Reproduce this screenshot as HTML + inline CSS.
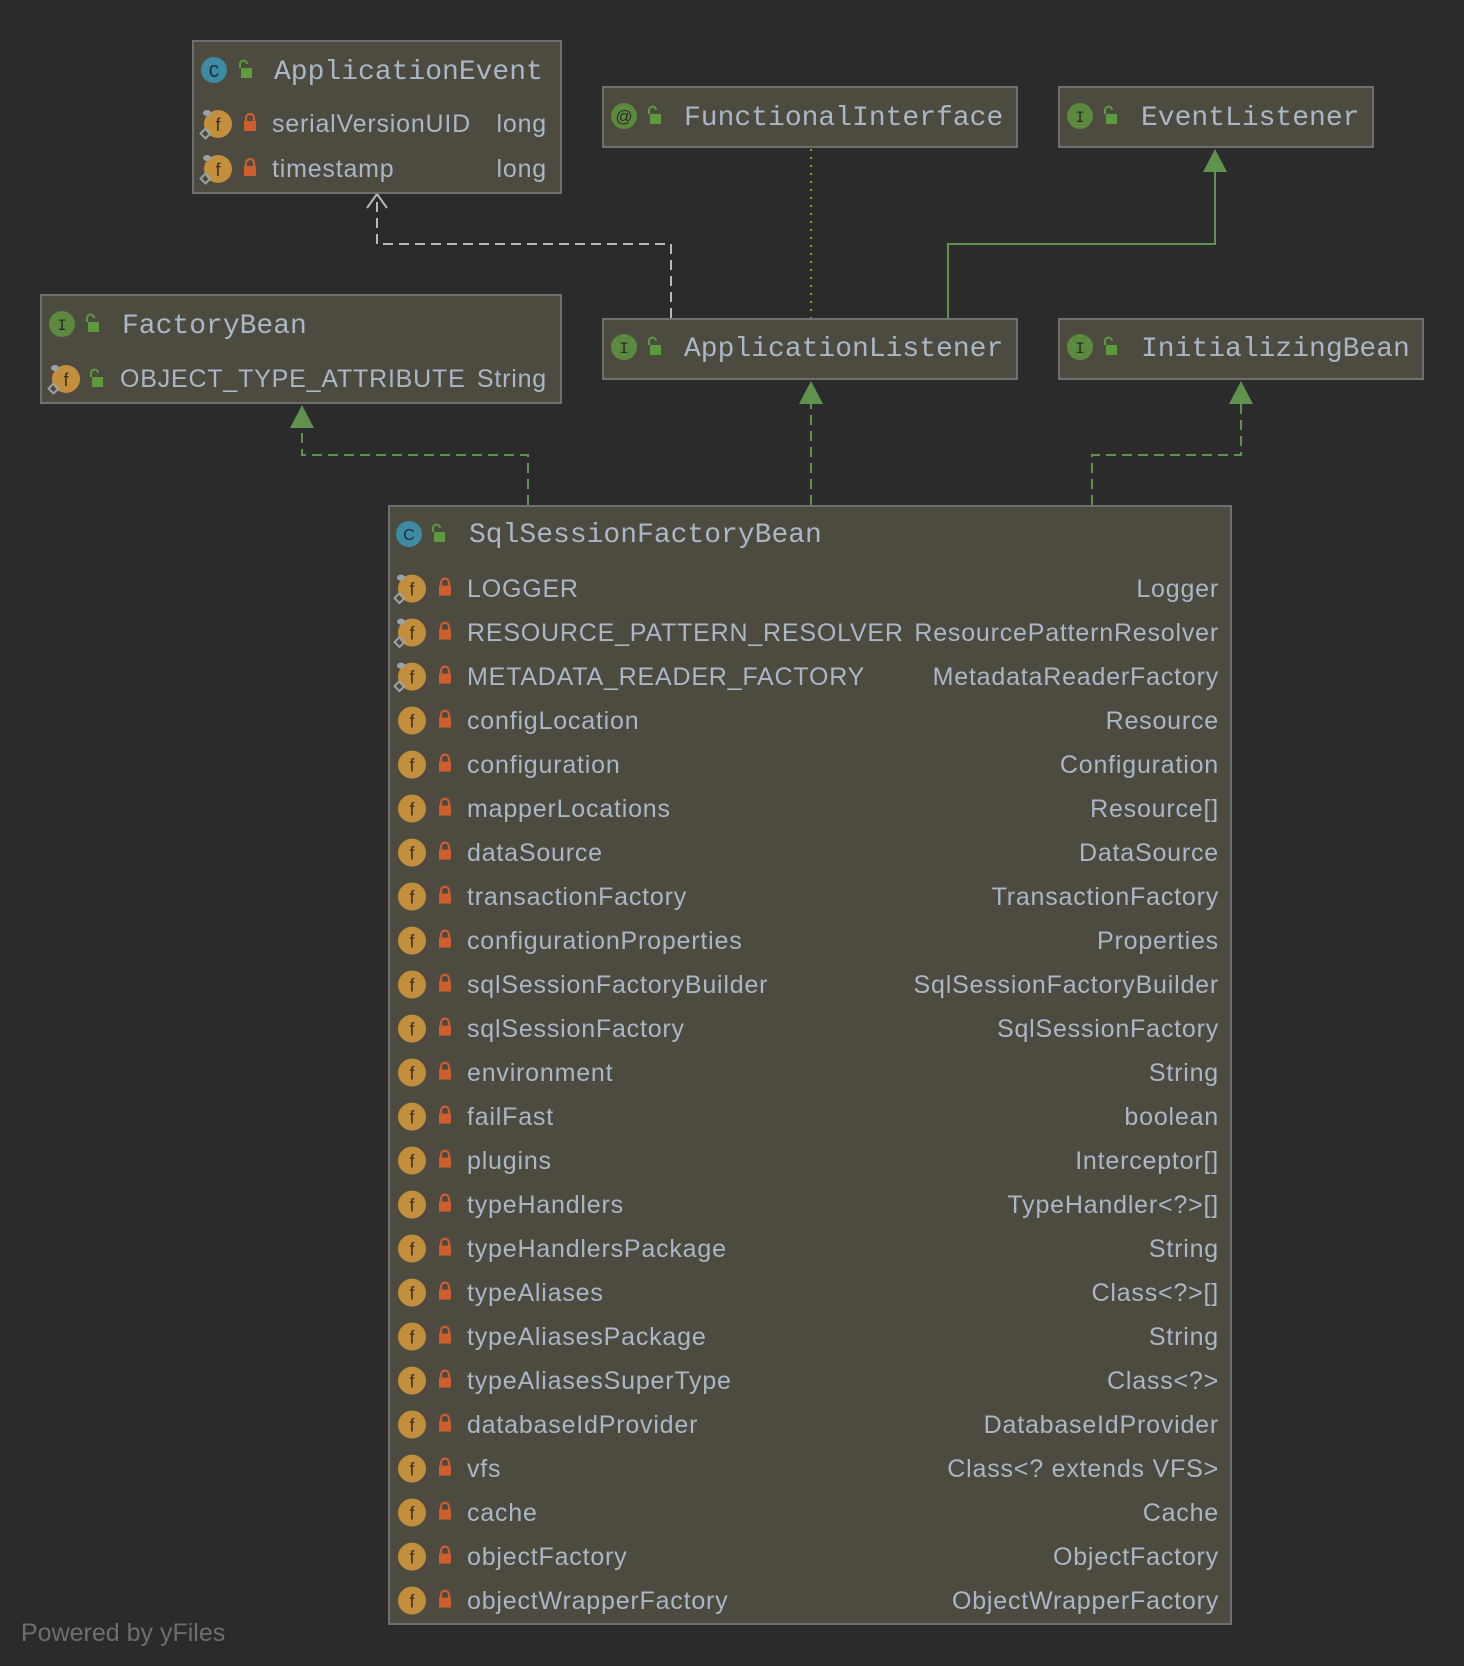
<!DOCTYPE html>
<html><head><meta charset="utf-8"><style>
html,body{margin:0;padding:0;background:#2b2b2b;}
body{width:1464px;height:1666px;position:relative;overflow:hidden;font-family:"Liberation Sans",sans-serif;color:#a9b7c6;}
.box{position:absolute;background:#4d4a40;border:2px solid #6f6f6f;box-sizing:border-box;}
.t{position:absolute;white-space:nowrap;line-height:30px;height:30px;}
.mono{font-family:"Liberation Mono",monospace;font-size:28px;margin-top:3px;}
.s{font-size:25px;letter-spacing:0.8px;}
.r{text-align:right;}
svg{position:absolute;left:0;top:0;}
</style></head><body>
<svg width="1464" height="1666" viewBox="0 0 1464 1666">
<defs>
<g id="f"><circle r="14" fill="#c38f3d"/><text x="0" y="7" font-family="Liberation Sans" font-size="18" fill="#3a3020" text-anchor="middle">f</text></g>
<g id="fs"><circle r="14" fill="#c38f3d"/><text x="0" y="7" font-family="Liberation Sans" font-size="18" fill="#3a3020" text-anchor="middle">f</text><ellipse cx="-11" cy="-11" rx="4" ry="3" fill="#9aa3ab"/><rect x="-16" y="6" width="7" height="7" fill="none" stroke="#9aa3ab" stroke-width="2" transform="rotate(45 -12.5 9.5)"/></g>
<g id="lk"><rect x="-6" y="-3" width="12" height="10" fill="#cc5f2d"/><path d="M-4,-3 v-3 a4,4 0 0 1 8,0 v3" fill="none" stroke="#cc5f2d" stroke-width="2.2"/></g>
<g id="ol"><rect x="-4" y="-2" width="11" height="10" fill="#5c9a3d"/><path d="M-5,-2 v-4 a3.5,3.5 0 0 1 7,0" fill="none" stroke="#5c9a3d" stroke-width="2"/></g>
<g id="I"><circle r="13" fill="#5b8a3e"/><text x="0" y="6" font-family="Liberation Mono" font-size="16" fill="#2b2b2b" text-anchor="middle">I</text></g>
</defs>
<path d="M671,318 V244 H377 V196" fill="none" stroke="#b8b8b8" stroke-width="2" stroke-dasharray="10,6"/>
<path d="M367,208 L377,194 L387,208" fill="none" stroke="#b8b8b8" stroke-width="2"/>
<path d="M811,149 V318" fill="none" stroke="#9a9a20" stroke-width="2" stroke-dasharray="2,6"/>
<path d="M948,318 V244 H1215 V170" fill="none" stroke="#5f924e" stroke-width="2"/>
<path d="M1203,172 L1215,149 L1227,172 Z" fill="#5f924e"/>
<path d="M528,505 V455 H302 V425" fill="none" stroke="#5f924e" stroke-width="2" stroke-dasharray="10,6"/>
<path d="M290,428 L302,405 L314,428 Z" fill="#5f924e"/>
<path d="M811,505 V402" fill="none" stroke="#5f924e" stroke-width="2" stroke-dasharray="10,6"/>
<path d="M799,404 L811,381 L823,404 Z" fill="#5f924e"/>
<path d="M1092,505 V455 H1241 V402" fill="none" stroke="#5f924e" stroke-width="2" stroke-dasharray="10,6"/>
<path d="M1229,404 L1241,381 L1253,404 Z" fill="#5f924e"/>
</svg>

<div class="box" style="left:192px;top:40px;width:370px;height:154px"></div>
<div class="box" style="left:602px;top:86px;width:416px;height:62px"></div>
<div class="box" style="left:1058px;top:86px;width:316px;height:62px"></div>
<div class="box" style="left:40px;top:294px;width:522px;height:110px"></div>
<div class="box" style="left:602px;top:318px;width:416px;height:62px"></div>
<div class="box" style="left:1058px;top:318px;width:366px;height:62px"></div>
<div class="box" style="left:388px;top:505px;width:844px;height:1120px"></div>

<svg width="1464" height="1666" viewBox="0 0 1464 1666">
<circle cx="214" cy="70" r="13" fill="#3d8ba3"/><text x="214" y="77" font-family="Liberation Mono" font-size="18" fill="#1f2a30" text-anchor="middle">C</text>
<use href="#ol" x="245" y="70"/>
<use href="#fs" x="218" y="124"/><use href="#lk" x="250" y="124"/>
<use href="#fs" x="218" y="169"/><use href="#lk" x="250" y="169"/>
<circle cx="624" cy="116" r="13" fill="#5b8a3e"/><text x="624" y="122" font-family="Liberation Sans" font-size="17" fill="#2b2b2b" text-anchor="middle">@</text>
<use href="#ol" x="654" y="116"/>
<use href="#I" x="1080" y="116"/><use href="#ol" x="1110" y="116"/>
<use href="#I" x="62" y="324"/><use href="#ol" x="92" y="324"/>
<use href="#fs" x="66" y="379"/><use href="#ol" x="96" y="379"/>
<use href="#I" x="624" y="347"/><use href="#ol" x="654" y="347"/>
<use href="#I" x="1080" y="347"/><use href="#ol" x="1110" y="347"/>
<circle cx="409" cy="534" r="13" fill="#3d8ba3"/><text x="409" y="540" font-family="Liberation Sans" font-size="16" fill="#1f2a30" text-anchor="middle">C</text>
<use href="#ol" x="438" y="534"/>
<use href="#fs" x="412" y="588.6"/><use href="#lk" x="445" y="588.6"/>
<use href="#fs" x="412" y="632.6"/><use href="#lk" x="445" y="632.6"/>
<use href="#fs" x="412" y="676.6"/><use href="#lk" x="445" y="676.6"/>
<g>
<use href="#f" x="412" y="720.6"/><use href="#lk" x="445" y="720.6"/>
<use href="#f" x="412" y="764.6"/><use href="#lk" x="445" y="764.6"/>
<use href="#f" x="412" y="808.6"/><use href="#lk" x="445" y="808.6"/>
<use href="#f" x="412" y="852.6"/><use href="#lk" x="445" y="852.6"/>
<use href="#f" x="412" y="896.6"/><use href="#lk" x="445" y="896.6"/>
<use href="#f" x="412" y="940.6"/><use href="#lk" x="445" y="940.6"/>
<use href="#f" x="412" y="984.6"/><use href="#lk" x="445" y="984.6"/>
<use href="#f" x="412" y="1028.6"/><use href="#lk" x="445" y="1028.6"/>
<use href="#f" x="412" y="1072.6"/><use href="#lk" x="445" y="1072.6"/>
<use href="#f" x="412" y="1116.6"/><use href="#lk" x="445" y="1116.6"/>
<use href="#f" x="412" y="1160.6"/><use href="#lk" x="445" y="1160.6"/>
<use href="#f" x="412" y="1204.6"/><use href="#lk" x="445" y="1204.6"/>
<use href="#f" x="412" y="1248.6"/><use href="#lk" x="445" y="1248.6"/>
<use href="#f" x="412" y="1292.6"/><use href="#lk" x="445" y="1292.6"/>
<use href="#f" x="412" y="1336.6"/><use href="#lk" x="445" y="1336.6"/>
<use href="#f" x="412" y="1380.6"/><use href="#lk" x="445" y="1380.6"/>
<use href="#f" x="412" y="1424.6"/><use href="#lk" x="445" y="1424.6"/>
<use href="#f" x="412" y="1468.6"/><use href="#lk" x="445" y="1468.6"/>
<use href="#f" x="412" y="1512.6"/><use href="#lk" x="445" y="1512.6"/>
<use href="#f" x="412" y="1556.6"/><use href="#lk" x="445" y="1556.6"/>
<use href="#f" x="412" y="1600.6"/><use href="#lk" x="445" y="1600.6"/>
</g>
</svg>

<div class="t mono" style="left:274px;top:55px">ApplicationEvent</div>
<div class="t s" style="left:272px;top:109px">serialVersionUID</div>
<div class="t s r" style="right:917px;top:109px">long</div>
<div class="t s" style="left:272px;top:154px">timestamp</div>
<div class="t s r" style="right:917px;top:154px">long</div>

<div class="t mono" style="left:684px;top:101px">FunctionalInterface</div>
<div class="t mono" style="left:1141px;top:101px">EventListener</div>
<div class="t mono" style="left:122px;top:309px">FactoryBean</div>
<div class="t s" style="left:120px;top:364px">OBJECT_TYPE_ATTRIBUTE</div>
<div class="t s r" style="right:917px;top:364px">String</div>
<div class="t mono" style="left:684px;top:332px">ApplicationListener</div>
<div class="t mono" style="left:1141px;top:332px">InitializingBean</div>

<div class="t mono" style="left:469px;top:518px">SqlSessionFactoryBean</div>

<div style="position:absolute;left:467px;top:573.6px;width:752px;">
<style>.row{position:relative;height:44px;line-height:30px;font-size:25px;letter-spacing:0.8px;white-space:nowrap}.row span{position:absolute;right:0;top:0}</style>
<div class="row">LOGGER<span>Logger</span></div>
<div class="row">RESOURCE_PATTERN_RESOLVER<span>ResourcePatternResolver</span></div>
<div class="row">METADATA_READER_FACTORY<span>MetadataReaderFactory</span></div>
<div class="row">configLocation<span>Resource</span></div>
<div class="row">configuration<span>Configuration</span></div>
<div class="row">mapperLocations<span>Resource[]</span></div>
<div class="row">dataSource<span>DataSource</span></div>
<div class="row">transactionFactory<span>TransactionFactory</span></div>
<div class="row">configurationProperties<span>Properties</span></div>
<div class="row">sqlSessionFactoryBuilder<span>SqlSessionFactoryBuilder</span></div>
<div class="row">sqlSessionFactory<span>SqlSessionFactory</span></div>
<div class="row">environment<span>String</span></div>
<div class="row">failFast<span>boolean</span></div>
<div class="row">plugins<span>Interceptor[]</span></div>
<div class="row">typeHandlers<span>TypeHandler&lt;?&gt;[]</span></div>
<div class="row">typeHandlersPackage<span>String</span></div>
<div class="row">typeAliases<span>Class&lt;?&gt;[]</span></div>
<div class="row">typeAliasesPackage<span>String</span></div>
<div class="row">typeAliasesSuperType<span>Class&lt;?&gt;</span></div>
<div class="row">databaseIdProvider<span>DatabaseIdProvider</span></div>
<div class="row">vfs<span>Class&lt;? extends VFS&gt;</span></div>
<div class="row">cache<span>Cache</span></div>
<div class="row">objectFactory<span>ObjectFactory</span></div>
<div class="row">objectWrapperFactory<span>ObjectWrapperFactory</span></div>
</div>

<div class="t" style="left:21px;top:1618px;font-size:25px;color:#6e6e6e">Powered by yFiles</div>
</body></html>
